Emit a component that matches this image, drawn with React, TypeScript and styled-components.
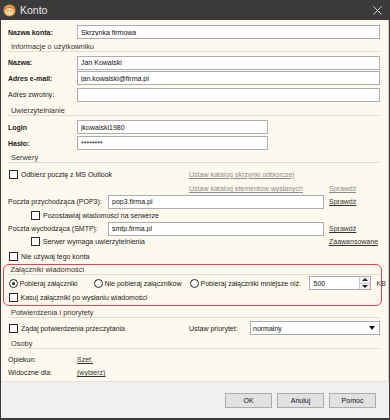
import React from "react";
import styled, { createGlobalStyle } from "styled-components";

const GlobalStyle = createGlobalStyle`
  html, body {
    margin: 0;
    padding: 0;
    background: #ffffff;
  }
  body {
    font-family: "Liberation Sans", Arial, sans-serif;
    font-size: 7px;
    color: #222;
  }
`;

const Window = styled.div`
  width: 390px;
  height: 420px;
  box-sizing: border-box;
  background: #3b3b3b;
  padding: 0 1px 2px 1px;
  display: flex;
  flex-direction: column;
`;

const TitleBar = styled.div`
  height: 20px;
  display: flex;
  align-items: center;
  padding-left: 2px;
  padding-right: 7px;
  color: #e6e6e6;
  font-size: 10.5px;
`;

const TitleText = styled.span`
  margin-left: 4px;
  flex: 1;
`;

const Body = styled.div`
  background: #fdf9ee;
  padding: 4px 8px 2px 7px;
  border-right: 1px solid #cfcbc2;
  display: flex;
  flex-direction: column;
`;

const Row = styled.div<{ $h: number; $indent?: number }>`
  height: ${(p) => p.$h}px;
  display: flex;
  align-items: center;
  padding-left: ${(p) => p.$indent || 0}px;
`;

const Header = styled.div<{ $h: number }>`
  height: ${(p) => p.$h}px;
  display: flex;
  flex-direction: column;
  justify-content: center;
`;

const HeaderTitle = styled.div`
  font-size: 7.4px;
  line-height: 8px;
  padding-left: 3px;
  color: #333;
  border-bottom: 1px solid #e2dccd;
`;

const Label = styled.span<{ $w: number; $bold?: boolean }>`
  width: ${(p) => p.$w}px;
  flex-shrink: 0;
  font-weight: ${(p) => (p.$bold ? 700 : 400)};
  color: #222;
  white-space: nowrap;
`;

const TextBox = styled.input<{ $w?: number }>`
  box-sizing: border-box;
  height: 14px;
  ${(p) => (p.$w ? `width: ${p.$w}px;` : "flex: 1; min-width: 0;")}
  border: 1px solid #abadb3;
  background: #fff;
  padding: 0 3px;
  margin: 0;
  font: inherit;
  font-size: 7px;
  color: #111;
  outline: none;
`;

const LinkText = styled.span<{ $muted?: boolean; $w?: number }>`
  text-decoration: underline;
  color: ${(p) => (p.$muted ? "#8c8c8c" : "#333")};
  white-space: nowrap;
  ${(p) => (p.$w ? `width: ${p.$w}px; flex-shrink: 0;` : "")}
`;

const Spacer = styled.span<{ $w: number }>`
  width: ${(p) => p.$w}px;
  flex-shrink: 0;
`;

const Option = styled.label<{ $w?: number }>`
  display: flex;
  align-items: center;
  white-space: nowrap;
  margin-left: 1px;
  ${(p) => (p.$w ? `width: ${p.$w}px; flex-shrink: 0;` : "")}
`;

const Box = styled.span`
  box-sizing: border-box;
  width: 9px;
  height: 9px;
  border: 1px solid #2a2a2a;
  background: #fff;
  margin-right: 3px;
  flex-shrink: 0;
`;

const Radio = styled.span<{ $on?: boolean }>`
  box-sizing: border-box;
  width: 9px;
  height: 9px;
  border: 1px solid #2a2a2a;
  border-radius: 50%;
  background: #fff;
  margin-right: 2px;
  flex-shrink: 0;
  display: flex;
  align-items: center;
  justify-content: center;

  &::after {
    content: "";
    width: 3px;
    height: 3px;
    border-radius: 50%;
    background: ${(p) => (p.$on ? "#222" : "transparent")};
  }
`;

const Highlight = styled.div`
  border: 1.5px solid #e8424b;
  border-radius: 6px;
  margin: 0 -2px 0 -5.5px;
  padding: 0 0.5px 0 4px;
`;

const Spin = styled.div`
  display: flex;
  height: 14px;
  box-sizing: border-box;
  border: 1px solid #abadb3;
  background: #fff;
  width: 62px;
  flex-shrink: 0;
`;

const SpinValue = styled.span`
  flex: 1;
  display: flex;
  align-items: center;
  padding-left: 4px;
  color: #111;
`;

const SpinButtons = styled.div`
  width: 10px;
  display: flex;
  flex-direction: column;
  border-left: 1px solid #c8c8c8;
`;

const SpinButton = styled.span<{ $down?: boolean }>`
  flex: 1;
  display: flex;
  align-items: center;
  justify-content: center;
  background: #f0f0f0;
  border-top: ${(p) => (p.$down ? "1px solid #c8c8c8" : "none")};

  &::after {
    content: "";
    border-left: 3px solid transparent;
    border-right: 3px solid transparent;
    ${(p) =>
      p.$down ? "border-top: 3px solid #222;" : "border-bottom: 3px solid #222;"}
  }
`;

const Unit = styled.span`
  margin-left: 6px;
  color: #333;
`;

const Select = styled.div`
  flex: 1;
  height: 14px;
  box-sizing: border-box;
  border: 1px solid #abadb3;
  background: #fff;
  display: flex;
  align-items: center;
  padding: 0 4px 0 2px;
  color: #111;
`;

const SelectValue = styled.span`
  flex: 1;
`;

const Caret = styled.span`
  border-left: 3.5px solid transparent;
  border-right: 3.5px solid transparent;
  border-top: 4px solid #111;
`;

const Footer = styled.div`
  flex: 1;
  background: #f0f0f0;
  border-top: 1px solid #e4e1da;
  display: flex;
  align-items: center;
  justify-content: flex-end;
  gap: 5px;
  padding-right: 13px;
  padding-top: 1px;
`;

const Button = styled.button`
  box-sizing: border-box;
  width: 47px;
  height: 15px;
  border: 1px solid #adadad;
  background: #e1e1e1;
  font: inherit;
  font-size: 7px;
  color: #111;
  padding: 0;
`;

const AppIcon = () => (
  <svg width="13" height="13" viewBox="0 0 13 13">
    <circle cx="6.5" cy="6.5" r="6" fill="#e89a3c" />
    <ellipse cx="6.5" cy="7.6" rx="4" ry="3.6" fill="#f7d9a6" />
    <circle cx="5" cy="7" r="0.7" fill="#8a5a2a" />
    <circle cx="8" cy="7" r="0.7" fill="#8a5a2a" />
    <path d="M2.5 5 Q6.5 1.5 10.5 5" stroke="#c9742a" strokeWidth="1" fill="none" />
  </svg>
);

const CloseIcon = () => (
  <svg width="9" height="9" viewBox="0 0 9 9">
    <path d="M0.5 0.5 L8.5 8.5 M8.5 0.5 L0.5 8.5" stroke="#d8d8d8" strokeWidth="1" />
  </svg>
);

const Check = ({ children, w }: { children: React.ReactNode; w?: number }) => (
  <Option $w={w}>
    <Box />
    {children}
  </Option>
);

const RadioOption = ({
  children,
  w,
  on,
}: {
  children: React.ReactNode;
  w?: number;
  on?: boolean;
}) => (
  <Option $w={w}>
    <Radio $on={on} />
    {children}
  </Option>
);

const Section = ({ title, h }: { title: string; h: number }) => (
  <Header $h={h}>
    <HeaderTitle>{title}</HeaderTitle>
  </Header>
);

const App = () => {
  return (
    <>
      <GlobalStyle />
      <Window>
        <TitleBar>
          <AppIcon />
          <TitleText>Konto</TitleText>
          <CloseIcon />
        </TitleBar>
        <Body>
          <Row $h={16}>
            <Label $w={69} $bold>Nazwa konta:</Label>
            <TextBox readOnly defaultValue="Skrzynka firmowa" />
          </Row>

          <Section title="Informacje o użytkowniku" h={15} />
          <Row $h={15}>
            <Label $w={69} $bold>Nazwa:</Label>
            <TextBox readOnly defaultValue="Jan Kowalski" />
          </Row>
          <Row $h={16}>
            <Label $w={69} $bold>Adres e-mail:</Label>
            <TextBox readOnly defaultValue="jan.kowalski@firma.pl" />
          </Row>
          <Row $h={17}>
            <Label $w={69}>Adres zwrotny:</Label>
            <TextBox readOnly defaultValue="" />
          </Row>

          <Section title="Uwierzytelnianie" h={16} />
          <Row $h={16}>
            <Label $w={69} $bold>Login</Label>
            <TextBox $w={191} readOnly defaultValue="jkowalski1980" />
          </Row>
          <Row $h={16}>
            <Label $w={69} $bold>Hasło:</Label>
            <TextBox $w={191} readOnly defaultValue="********" />
          </Row>

          <Section title="Serwery" h={15} />
          <Row $h={16}>
            <Check w={180}>Odbierz pocztę z MS Outlook</Check>
            <LinkText $muted>Ustaw katalog skrzynki odbiorczej</LinkText>
          </Row>
          <Row $h={13}>
            <Spacer $w={181} />
            <LinkText $muted $w={140}>
              Ustaw katalog elementów wysłanych
            </LinkText>
            <LinkText $muted>Sprawdź</LinkText>
          </Row>
          <Row $h={13}>
            <Label $w={100}>Poczta przychodząca (POP3):</Label>
            <TextBox $w={216} readOnly defaultValue="pop3.firma.pl" />
            <Spacer $w={5} />
            <LinkText>Sprawdź</LinkText>
          </Row>
          <Row $h={14} $indent={22}>
            <Check>Pozostawiaj wiadomości na serwerze</Check>
          </Row>
          <Row $h={13}>
            <Label $w={100}>Poczta wychodząca (SMTP):</Label>
            <TextBox $w={216} readOnly defaultValue="smtp.firma.pl" />
            <Spacer $w={5} />
            <LinkText>Sprawdź</LinkText>
          </Row>
          <Row $h={13} $indent={22}>
            <Check w={298}>Serwer wymaga uwierzytelnienia</Check>
            <LinkText>Zaawansowane</LinkText>
          </Row>
          <Row $h={16}>
            <Check>Nie używaj tego konta</Check>
          </Row>

          <Highlight>
            <Section title="Załączniki wiadomości" h={11} />
            <Row $h={14}>
              <RadioOption w={84} on>
                Pobieraj załączniki
              </RadioOption>
              <RadioOption w={95}>Nie pobieraj załączników</RadioOption>
              <RadioOption w={119}>Pobieraj załączniki mniejsze niż:</RadioOption>
              <Spin>
                <SpinValue>500</SpinValue>
                <SpinButtons>
                  <SpinButton />
                  <SpinButton $down />
                </SpinButtons>
              </Spin>
              <Unit>KB</Unit>
            </Row>
            <Row $h={15}>
              <Check>Kasuj załączniki po wysłaniu wiadomości</Check>
            </Row>
          </Highlight>

          <Section title="Potwierdzenia i priorytety" h={14} />
          <Row $h={16}>
            <Check w={180}>Żądaj potwierdzenia przeczytania</Check>
            <Label $w={61}>Ustaw priorytet:</Label>
            <Select>
              <SelectValue>normalny</SelectValue>
              <Caret />
            </Select>
          </Row>

          <Section title="Osoby" h={16} />
          <Row $h={14}>
            <Label $w={69}>Opiekun:</Label>
            <LinkText>Szef.</LinkText>
          </Row>
          <Row $h={13}>
            <Label $w={69}>Widoczne dla:</Label>
            <LinkText>(wybierz)</LinkText>
          </Row>
        </Body>
        <Footer>
          <Button>OK</Button>
          <Button>Anuluj</Button>
          <Button>Pomoc</Button>
        </Footer>
      </Window>
    </>
  );
};

export default App;
